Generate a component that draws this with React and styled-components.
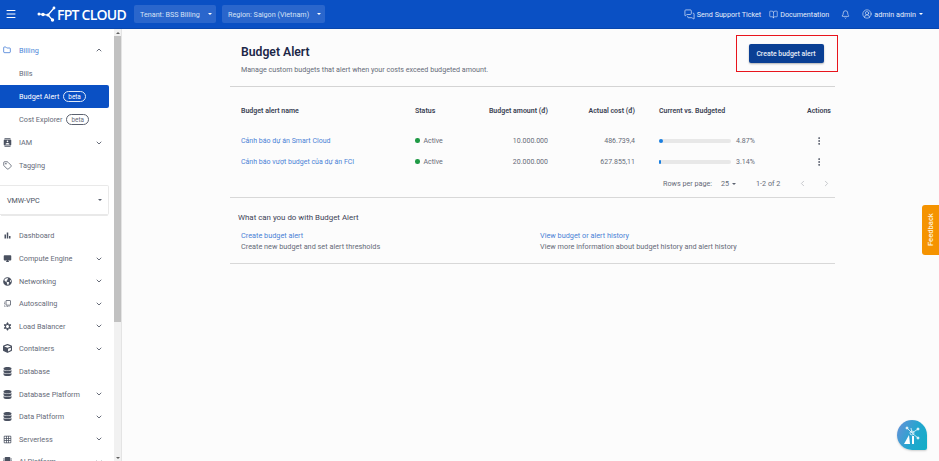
import styled, { createGlobalStyle } from "styled-components";
import {
  Bell,
  BookOpen,
  ChevronDown,
  ChevronLeft,
  ChevronRight,
  ChevronUp,
  CircleUserRound,
  Folder,
  Menu,
  MessagesSquare,
  MoreVertical,
  Tag,
} from "lucide-react";
import {
  MdBarChart,
  MdContacts,
  MdDesktopWindows,
  MdFilterVintage,
  MdFlipToFront,
  MdGridOn,
} from "react-icons/md";
import { FaCube, FaDatabase, FaGlobeAmericas, FaMicrochip } from "react-icons/fa";

const GlobalStyle = createGlobalStyle`
  html, body {
    margin: 0;
    height: 100%;
    overflow: hidden;
    background: #fcfcfc;
    font-family: Roboto, "Liberation Sans", sans-serif;
  }
  #root { height: 100%; }
  * { box-sizing: border-box; }
`;

const Page = styled.div`
  position: relative;
  width: 939px;
  height: 461px;
  display: flex;
  flex-direction: column;
  overflow: hidden;
`;

const Header = styled.header`
  height: 29px;
  flex: none;
  background: #0a50c4;
  color: #e6edf9;
  display: flex;
  align-items: center;
  font-size: 7.2px;
  padding-left: 5px;
  border-bottom: 1px solid #0846ad;
`;

const Burger = styled.span`
  display: flex;
  width: 14px;
  color: #fff;
`;

const Logo = styled.div`
  margin-left: 18px;
  display: flex;
  align-items: center;
  gap: 1px;
  color: #fff;
  font-family: "Open Sans", sans-serif;
  font-size: 14px;
  font-weight: 600;
  letter-spacing: -0.75px;
  width: 97px;
  white-space: nowrap;
`;

const Selector = styled.div`
  height: 18px;
  width: ${(p) => p.$w}px;
  margin-right: 6px;
  padding: 0 4px 0 6px;
  display: flex;
  align-items: center;
  justify-content: space-between;
  background: #2a66cc;
  border-radius: 2px;
  color: #d6e2f6;
  white-space: nowrap;
`;

const Caret = styled.span`
  width: 0;
  height: 0;
  border-left: 2.5px solid transparent;
  border-right: 2.5px solid transparent;
  border-top: 2.5px solid ${(p) => p.$color || "#fff"};
`;

const HeaderRight = styled.div`
  margin-left: auto;
  display: flex;
  align-items: center;
  padding-right: 16px;
`;

const HeaderLink = styled.span`
  display: flex;
  align-items: center;
  gap: 2px;
  margin-left: ${(p) => p.$ml || 0}px;
  white-space: nowrap;
`;

const Body = styled.div`
  flex: 1;
  display: flex;
  min-height: 0;
`;

const Sidebar = styled.aside`
  width: 122px;
  flex: none;
  display: flex;
  background: #fff;
  border-right: 1px solid #e4e4e4;
`;

const Nav = styled.nav`
  width: 114px;
  flex: none;
  padding: 10px 5px 0 0;
  overflow: hidden;
`;

const NavRow = styled.div`
  height: ${(p) => (p.$sub ? 23.3 : 22.6)}px;
  display: flex;
  align-items: center;
  padding-left: ${(p) => (p.$sub ? 19 : 3)}px;
  padding-right: 6px;
  font-size: 7.3px;
  color: ${(p) => (p.$active ? "#fff" : p.$open ? "#4d86d8" : "#666b78")};
  background: ${(p) => (p.$active ? "#0a50c4" : "transparent")};
  border-radius: ${(p) => (p.$active ? "0 2px 2px 0" : 0)};
`;

const NavIcon = styled.span`
  width: 16px;
  flex: none;
  display: flex;
  color: ${(p) => (p.$open ? "#1f63cf" : "#4a5160")};
`;

const NavLabel = styled.span`
  flex: 1;
  display: flex;
  align-items: center;
  gap: 4px;
  white-space: nowrap;
`;

const Beta = styled.span`
  height: 11px;
  padding: 0 4px;
  display: inline-flex;
  align-items: center;
  border-radius: 6px;
  font-size: 6.4px;
  border: 0.7px solid ${(p) => (p.$active ? "#dfe9f8" : "#5c6270")};
`;

const Chevron = styled.span`
  display: flex;
  color: #4a5160;
`;

const VpcBox = styled.div`
  height: 30px;
  margin: 8.5px 0 9.5px 0;
  padding: 0 6px 0 7px;
  display: flex;
  align-items: center;
  justify-content: space-between;
  font-size: 7.2px;
  color: #4a5160;
  border: 1px solid #e9e9e9;
  border-left: 0;
  border-radius: 0 2px 2px 0;
  box-shadow: 0 2px 0 -1px #e9e9e9;
`;

const ScrollTrack = styled.div`
  width: 7px;
  flex: none;
  background: #f1f1f1;
  display: flex;
  flex-direction: column;
  align-items: center;
`;

const ScrollArrow = styled.span`
  height: 7px;
  flex: none;
  display: flex;
  align-items: center;
  &::before {
    content: "";
    border-left: 2px solid transparent;
    border-right: 2px solid transparent;
    ${(p) => (p.$down ? "border-top" : "border-bottom")}: 2px solid #606060;
  }
`;

const ScrollThumb = styled.div`
  width: 100%;
  height: 286px;
  background: #c1c1c1;
`;

const ScrollSpace = styled.div`
  flex: 1;
`;

const Main = styled.main`
  flex: 1;
  padding-left: 108px;
  background: #fcfcfc;
`;

const Content = styled.div`
  width: 605px;
`;

const TitleBar = styled.div`
  height: 58px;
  padding: 6px 0 0 11px;
  display: flex;
  justify-content: space-between;
  align-items: flex-start;
  border-bottom: 1px solid #d4d4d4;
`;

const TitleBlock = styled.div`
  padding-top: 9.5px;
`;

const Title = styled.h1`
  margin: 0;
  font-size: 12.2px;
  line-height: 15px;
  font-weight: 600;
  color: #1c2748;
`;

const Subtitle = styled.p`
  margin: 5.5px 0 0;
  font-size: 7.15px;
  line-height: 10px;
  color: #666b78;
`;

const Highlight = styled.div`
  width: 102px;
  height: 37px;
  margin-right: -3px;
  padding-right: 2px;
  display: flex;
  align-items: center;
  justify-content: center;
  border: 1.5px solid #e8141c;
`;

const PrimaryButton = styled.button`
  width: 75px;
  height: 19px;
  padding: 0;
  border: 0;
  border-radius: 2px;
  background: #0a3f94;
  color: #e8eef8;
  font: 500 6.9px Roboto, sans-serif;
  box-shadow: 0 1px 2px rgba(0, 0, 0, 0.3);
`;

const TableRow = styled.div`
  height: ${(p) => p.$h}px;
  padding-left: 11px;
  padding-top: ${(p) => p.$pt || 0}px;
  display: grid;
  grid-template-columns: 174px 65px 68px 87px 24px 148px 23px;
  align-items: center;
  font-size: 7px;
  color: ${(p) => (p.$head ? "#3a3f52" : "#666b78")};
  font-weight: ${(p) => (p.$head ? 600 : 400)};
`;

const RightCell = styled.span`
  text-align: right;
  white-space: nowrap;
`;

const NameLink = styled.a`
  color: #4a82d6;
  white-space: nowrap;
`;

const StatusCell = styled.span`
  display: flex;
  align-items: center;
  gap: 4px;
`;

const StatusDot = styled.span`
  width: 4.5px;
  height: 4.5px;
  border-radius: 50%;
  background: #1f9a45;
`;

const ProgressCell = styled.div`
  display: flex;
  align-items: center;
  gap: 5px;
`;

const ProgressTrack = styled.div`
  width: 72px;
  height: 4px;
  border-radius: 2px;
  background: #e8e8e8;
`;

const ProgressFill = styled.div`
  height: 100%;
  border-radius: 2px;
  background: #1a7fe0;
`;

const ActionCell = styled.span`
  display: flex;
  justify-content: center;
  color: #4a5160;
`;

const Pagination = styled.div`
  height: 26px;
  display: flex;
  align-items: center;
  font-size: 7.2px;
  color: #666b78;
  padding-left: 433px;
  border-bottom: 1.5px solid #d8d8d8;
  padding-bottom: 2px;
  white-space: nowrap;
`;

const PageSize = styled.span`
  display: flex;
  align-items: center;
  gap: 3px;
  margin-left: 9px;
  width: 35px;
`;

const PagerButtons = styled.span`
  display: flex;
  gap: 14.5px;
  margin-left: 18px;
  color: #b5b8be;
`;

const HelpSection = styled.section`
  height: 66px;
  padding-top: 14px;
  border-bottom: 1.5px solid #d8d8d8;
`;

const HelpTitle = styled.h2`
  margin: 0 0 0 8px;
  font-size: 7.9px;
  line-height: 11px;
  font-weight: 400;
  color: #3d4356;
`;

const HelpGrid = styled.div`
  margin-top: 7px;
  padding-left: 11px;
  display: grid;
  grid-template-columns: 299px 1fr;
  font-size: 7.3px;
  line-height: 11px;
  color: #666b78;
`;

const HelpItem = styled.div`
  display: flex;
  flex-direction: column;
`;

const Feedback = styled.div`
  position: absolute;
  right: 0;
  top: 205px;
  width: 17px;
  height: 50px;
  display: flex;
  align-items: center;
  justify-content: center;
  background: #f59300;
  color: #fff3df;
  font-size: 7.6px;
  font-weight: 500;
  writing-mode: vertical-rl;
  rotate: 180deg;
  border-radius: 0 3px 3px 0;
`;

const AiBubble = styled.div`
  position: absolute;
  left: 897px;
  top: 420px;
  width: 30px;
  height: 30px;
  display: flex;
  align-items: center;
  justify-content: center;
  border-radius: 50% 50% 2px 50%;
  background: linear-gradient(115deg, #6a8fd8, #23a6cf 55%, #12aec6);
  box-shadow: 0 1px 2px rgba(0, 0, 0, 0.18);
`;

const sideMenu = [
  { label: "Dashboard", icon: MdBarChart },
  { label: "Compute Engine", icon: MdDesktopWindows, more: true },
  { label: "Networking", icon: FaGlobeAmericas, more: true },
  { label: "Autoscaling", icon: MdFlipToFront, more: true },
  { label: "Load Balancer", icon: MdFilterVintage, more: true },
  { label: "Containers", icon: FaCube, more: true },
  { label: "Database", icon: FaDatabase },
  { label: "Database Platform", icon: FaDatabase, more: true },
  { label: "Data Platform", icon: FaDatabase, more: true },
  { label: "Serverless", icon: MdGridOn, more: true },
  { label: "AI Platform", icon: FaMicrochip, more: true },
];

const budgets = [
  {
    name: "Cảnh báo dự án Smart Cloud",
    amount: "10.000.000",
    actual: "486.739,4",
    percent: 4.87,
  },
  {
    name: "Cảnh báo vượt budget của dự án FCI",
    amount: "20.000.000",
    actual: "627.855,11",
    percent: 3.14,
  },
];

function MenuRow({ label, icon: Icon, more }) {
  return (
    <NavRow>
      <NavIcon>
        <Icon size={9} />
      </NavIcon>
      <NavLabel>{label}</NavLabel>
      {more && (
        <Chevron>
          <ChevronDown size={8} strokeWidth={2.5} />
        </Chevron>
      )}
    </NavRow>
  );
}

function LogoMark() {
  return (
    <svg width="19" height="18" viewBox="0 0 19 18" fill="#fff" stroke="#fff">
      <path d="M2 9 L11 10 L17 3 M11 10 L15.5 15" strokeWidth="1.2" fill="none" />
      <circle cx="2" cy="9" r="1.5" stroke="none" />
      <circle cx="6" cy="9.5" r="1.8" stroke="none" />
      <circle cx="11" cy="10" r="1.6" stroke="none" />
      <circle cx="17" cy="3" r="1.4" stroke="none" />
      <circle cx="15.5" cy="15" r="1.7" stroke="none" />
    </svg>
  );
}

function AiMark() {
  return (
    <svg width="22" height="22" viewBox="0 0 22 22" fill="none" stroke="#e6f6fb">
      <path d="M11 9 L6 4 M11 9 L17 5 M11 9 L17 14 M11 9 L10 4" strokeWidth="0.8" />
      <circle cx="11" cy="9" r="2" strokeWidth="0.8" />
      <circle cx="6" cy="4" r="1" fill="#e6f6fb" />
      <circle cx="17" cy="5" r="1" fill="#e6f6fb" />
      <circle cx="17" cy="14" r="1" fill="#e6f6fb" />
      <path d="M3 20 L8 11 L9 20 Z" fill="#fff" stroke="none" />
      <path d="M11 12 H13 V20 H11 Z" fill="#fff" stroke="none" />
    </svg>
  );
}

export default function App() {
  return (
    <Page>
      <GlobalStyle />
      <Header>
        <Burger>
          <Menu size={12} strokeWidth={2} />
        </Burger>
        <Logo>
          <LogoMark />
          FPT CLOUD
        </Logo>
        <Selector $w={82}>
          Tenant: BSS Billing
          <Caret />
        </Selector>
        <Selector $w={103}>
          Region: Saigon (Vietnam)
          <Caret />
        </Selector>
        <HeaderRight>
          <HeaderLink>
            <MessagesSquare size={11} strokeWidth={1.5} />
            Send Support Ticket
          </HeaderLink>
          <HeaderLink $ml={8}>
            <BookOpen size={9} strokeWidth={1.5} />
            Documentation
          </HeaderLink>
          <HeaderLink $ml={12}>
            <Bell size={9} strokeWidth={1.7} />
          </HeaderLink>
          <HeaderLink $ml={12}>
            <CircleUserRound size={10} strokeWidth={1.5} />
            admin admin
          </HeaderLink>
          <HeaderLink $ml={3}>
            <Caret />
          </HeaderLink>
        </HeaderRight>
      </Header>
      <Body>
        <Sidebar>
          <Nav>
            <NavRow $open>
              <NavIcon $open>
                <Folder size={8} strokeWidth={2} />
              </NavIcon>
              <NavLabel>Billing</NavLabel>
              <Chevron>
                <ChevronUp size={8} strokeWidth={2.5} />
              </Chevron>
            </NavRow>
            <NavRow $sub>
              <NavLabel>Bills</NavLabel>
            </NavRow>
            <NavRow $sub $active>
              <NavLabel>
                Budget Alert <Beta $active>beta</Beta>
              </NavLabel>
            </NavRow>
            <NavRow $sub>
              <NavLabel>
                Cost Explorer <Beta>beta</Beta>
              </NavLabel>
            </NavRow>
            <MenuRow label="IAM" icon={MdContacts} more />
            <MenuRow label="Tagging" icon={Tag} />
            <VpcBox>
              VMW-VPC
              <Caret $color="#5c6270" />
            </VpcBox>
            {sideMenu.map((item) => (
              <MenuRow key={item.label} {...item} />
            ))}
          </Nav>
          <ScrollTrack>
            <ScrollArrow />
            <ScrollThumb />
            <ScrollSpace />
            <ScrollArrow $down />
          </ScrollTrack>
        </Sidebar>
        <Main>
          <Content>
            <TitleBar>
              <TitleBlock>
                <Title>Budget Alert</Title>
                <Subtitle>
                  Manage custom budgets that alert when your costs exceed budgeted amount.
                </Subtitle>
              </TitleBlock>
              <Highlight>
                <PrimaryButton>Create budget alert</PrimaryButton>
              </Highlight>
            </TitleBar>
            <TableRow $head $h={43} $pt={5}>
              <span>Budget alert name</span>
              <span>Status</span>
              <RightCell>Budget amount (đ)</RightCell>
              <RightCell>Actual cost (đ)</RightCell>
              <span />
              <span>Current vs. Budgeted</span>
              <RightCell>Actions</RightCell>
            </TableRow>
            {budgets.map((row) => (
              <TableRow key={row.name} $h={21}>
                <NameLink>{row.name}</NameLink>
                <StatusCell>
                  <StatusDot />
                  Active
                </StatusCell>
                <RightCell>{row.amount}</RightCell>
                <RightCell>{row.actual}</RightCell>
                <span />
                <ProgressCell>
                  <ProgressTrack>
                    <ProgressFill style={{ width: `${row.percent}%` }} />
                  </ProgressTrack>
                  {row.percent}%
                </ProgressCell>
                <ActionCell>
                  <MoreVertical size={10} strokeWidth={2.2} />
                </ActionCell>
              </TableRow>
            ))}
            <Pagination>
              Rows per page:
              <PageSize>
                25
                <Caret $color="#5c6270" />
              </PageSize>
              1-2 of 2
              <PagerButtons>
                <ChevronLeft size={9} />
                <ChevronRight size={9} />
              </PagerButtons>
            </Pagination>
            <HelpSection>
              <HelpTitle>What can you do with Budget Alert</HelpTitle>
              <HelpGrid>
                <HelpItem>
                  <NameLink>Create budget alert</NameLink>
                  Create new budget and set alert thresholds
                </HelpItem>
                <HelpItem>
                  <NameLink>View budget or alert history</NameLink>
                  View more information about budget history and alert history
                </HelpItem>
              </HelpGrid>
            </HelpSection>
          </Content>
        </Main>
      </Body>
      <Feedback>Feedback</Feedback>
      <AiBubble>
        <AiMark />
      </AiBubble>
    </Page>
  );
}
